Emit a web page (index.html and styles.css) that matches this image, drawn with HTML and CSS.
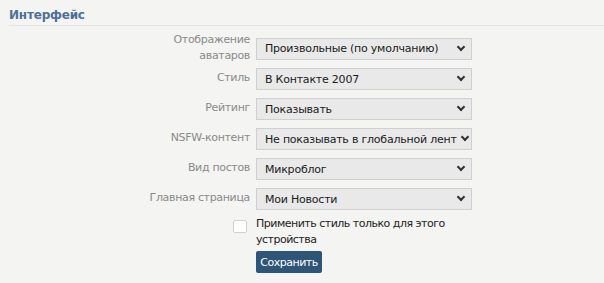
FILE: index.html
```html
<!DOCTYPE html>
<html>

<head>
    <title>Интерфейс</title>
    <meta charset="UTF-8">
    <meta name="viewport" content="width=device-width, initial-scale=1.0">
    <link rel="stylesheet" href="styles.css">
</head>

<body>
    <div class="section">
        <h2 class="section-title">Интерфейс</h2>
        <form class="settings">
            <label class="field-label two-lines" for="avatars">Отображение<br>аватаров</label>
            <div class="select-wrap">
                <select id="avatars">
                    <option>Произвольные (по умолчанию)</option>
                </select>
            </div>

            <label class="field-label" for="style">Стиль</label>
            <div class="select-wrap">
                <select id="style">
                    <option>В Контакте 2007</option>
                </select>
            </div>

            <label class="field-label" for="rating">Рейтинг</label>
            <div class="select-wrap">
                <select id="rating">
                    <option>Показывать</option>
                </select>
            </div>

            <label class="field-label" for="nsfw">NSFW-контент</label>
            <div class="select-wrap select-long">
                <select id="nsfw">
                    <option>Не показывать в глобальной ленте</option>
                </select>
            </div>

            <label class="field-label" for="posts">Вид постов</label>
            <div class="select-wrap">
                <select id="posts">
                    <option>Микроблог</option>
                </select>
            </div>

            <label class="field-label" for="home">Главная страница</label>
            <div class="select-wrap">
                <select id="home">
                    <option>Мои Новости</option>
                </select>
            </div>

            <div class="check-cell">
                <input type="checkbox" id="local">
            </div>
            <label class="check-text" for="local">Применить стиль только для этого устройства</label>

            <div></div>
            <div>
                <button type="button">Сохранить</button>
            </div>
        </form>
    </div>
</body>

</html>
```

FILE: styles.css
```css
* {
    margin: 0;
    padding: 0;
    box-sizing: border-box;
}

body {
    font-family: "DejaVu Sans", Verdana, sans-serif;
    font-size: 11px;
    background-color: #f4f4f2;
    color: #222;
}

.section {
    padding-top: 8px;
}

.section-title {
    font-size: 12px;
    line-height: 14px;
    font-weight: bold;
    letter-spacing: -0.2px;
    color: #4d6f98;
    margin-left: 9px;
    padding-bottom: 3px;
    border-bottom: 1px solid #e3e3e1;
}

.settings {
    display: grid;
    grid-template-columns: 250px 216px;
    column-gap: 6px;
    row-gap: 8px;
    padding-top: 11px;
    align-items: center;
}

.field-label {
    text-align: right;
    color: #8a8a8a;
    line-height: 15px;
    letter-spacing: -0.33px;
    margin-top: -4px;
}

.field-label.two-lines {
    line-height: 16px;
    margin-top: -5px;
    margin-bottom: -4px;
}

.select-wrap {
    position: relative;
    height: 22px;
}

.select-wrap select {
    appearance: none;
    -webkit-appearance: none;
    width: 100%;
    height: 22px;
    font-family: inherit;
    font-size: 11px;
    letter-spacing: -0.22px;
    color: #1a1a1a;
    background-color: #e9e9e9;
    border: 1px solid #d0d0d0;
    border-radius: 0;
    padding: 0 20px 0 8px;
    outline: none;
}

.select-long select {
    padding-right: 14px;
}

.select-wrap::after {
    content: "";
    position: absolute;
    right: 8px;
    top: 6px;
    width: 4px;
    height: 4px;
    border-right: 2px solid #333;
    border-bottom: 2px solid #333;
    transform: rotate(45deg);
    pointer-events: none;
}

.select-long::after {
    right: 4px;
}

.check-cell {
    display: flex;
    justify-content: flex-end;
    align-self: start;
    margin-top: 2px;
    padding-right: 3px;
}

.check-cell input {
    appearance: none;
    -webkit-appearance: none;
    width: 14px;
    height: 13px;
    background-color: #fff;
    border: 1px solid #d2d2d2;
    border-radius: 2px;
}

.check-text {
    line-height: 16px;
    letter-spacing: -0.5px;
    color: #222;
    margin-top: -2px;
    margin-bottom: -5px;
}

button {
    display: block;
    width: 66px;
    height: 22px;
    background-color: #2e5577;
    color: #fff;
    font-family: inherit;
    font-size: 11px;
    letter-spacing: -0.5px;
    border: none;
    border-radius: 2px;
    cursor: pointer;
}

button:hover {
    background-color: #274a69;
}
```
